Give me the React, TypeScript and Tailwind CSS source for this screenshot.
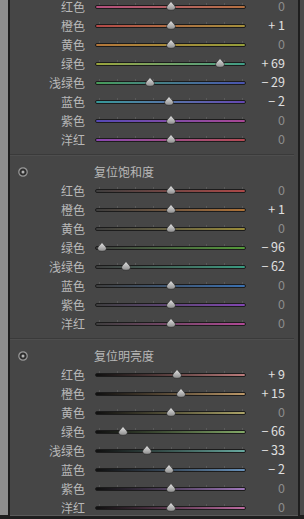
import React from 'react';

type Row = { label: string; value: number; track: string };

const hue: Row[] = [
  { label: '红色', value: 0, track: 'from-[#b44f7e] to-[#b4703f]' },
  { label: '橙色', value: 1, track: 'from-[#b44848] to-[#a48f3a]' },
  { label: '黄色', value: 0, track: 'from-[#b4763a] to-[#949e3a]' },
  { label: '绿色', value: 69, track: 'from-[#9aa43a] to-[#3e9c86]' },
  { label: '浅绿色', value: -29, track: 'from-[#489c58] to-[#4a52b0]' },
  { label: '蓝色', value: -2, track: 'from-[#349898] to-[#6446b2]' },
  { label: '紫色', value: 0, track: 'from-[#5448b6] to-[#a84694]' },
  { label: '洋红', value: 0, track: 'from-[#8a46b2] to-[#b44a52]' },
];

const saturation: Row[] = [
  { label: '红色', value: 0, track: 'from-[#3e3e3e] to-[#ac4848]' },
  { label: '橙色', value: 1, track: 'from-[#3e3e3e] to-[#ae7236]' },
  { label: '黄色', value: 0, track: 'from-[#3e3e3e] to-[#9a8c38]' },
  { label: '绿色', value: -96, track: 'from-[#3e3e3e] to-[#549a38]' },
  { label: '浅绿色', value: -62, track: 'from-[#3e3e3e] to-[#389a80]' },
  { label: '蓝色', value: 0, track: 'from-[#3e3e3e] to-[#3a70b0]' },
  { label: '紫色', value: 0, track: 'from-[#3e3e3e] to-[#8246b2]' },
  { label: '洋红', value: 0, track: 'from-[#3e3e3e] to-[#b04896]' },
];

const luminance: Row[] = [
  { label: '红色', value: 9, track: 'from-[#101010] to-[#bc7c7c]' },
  { label: '橙色', value: 15, track: 'from-[#101010] to-[#bc9868]' },
  { label: '黄色', value: 0, track: 'from-[#101010] to-[#aca468]' },
  { label: '绿色', value: -66, track: 'from-[#101010] to-[#84aa68]' },
  { label: '浅绿色', value: -33, track: 'from-[#101010] to-[#68aaa0]' },
  { label: '蓝色', value: -2, track: 'from-[#101010] to-[#6892bc]' },
  { label: '紫色', value: 0, track: 'from-[#101010] to-[#a078bc]' },
  { label: '洋红', value: 0, track: 'from-[#101010] to-[#bc6aa0]' },
];

function formatValue(v: number) {
  if (v > 0) return `+ ${v}`;
  if (v < 0) return `− ${Math.abs(v)}`;
  return '0';
}

function Thumb() {
  return (
    <svg width="11" height="10" viewBox="0 0 11 10">
      <defs>
        <linearGradient id="thumbFill" x1="0" y1="0" x2="0" y2="1">
          <stop offset="0" stopColor="#e4e4e4" />
          <stop offset="1" stopColor="#8c8c8c" />
        </linearGradient>
      </defs>
      <path d="M5.5 0.5 L9.4 5 Q10.5 6.6 9.4 8 Q8.3 9.3 5.5 9.3 Q2.7 9.3 1.6 8 Q0.5 6.6 1.6 5 Z" fill="url(#thumbFill)" stroke="#262626" strokeWidth="0.6" />
    </svg>
  );
}

const ticks = [0, 1, 2, 3, 4, 5, 6, 7, 8];

function SliderRow({ row }: { row: Row }) {
  // thumb travels between 4px and 147px of the 151px track
  const left = 75.5 + (row.value / 100) * 71.5;
  return (
    <div className="flex h-[19px] items-center">
      <div className="w-[75px] text-right text-[12px] text-[#b8b8b8]">{row.label}</div>
      <div className="relative ml-[10px] h-full w-[151px]">
        {ticks.map((t) => (
          <div
            key={t}
            className="absolute top-[6px] h-[2px] w-[1px] bg-[#595959]"
            style={{ left: 4 + t * 17.9 }}
          />
        ))}
        <div className={`absolute left-0 right-0 top-[8px] h-[4px] rounded-full border border-[#1c1c1c] bg-linear-to-r ${row.track}`} />
        <div className="absolute top-[4px] -translate-x-1/2" style={{ left }}>
          <Thumb />
        </div>
      </div>
      <div className={`w-[39px] text-right text-[12.5px] ${row.value === 0 ? 'text-[#8c8c8c]' : 'text-[#e0e0e0]'}`}>
        {formatValue(row.value)}
      </div>
    </div>
  );
}

function ResetIcon() {
  return (
    <svg width="10" height="10" viewBox="0 0 10 10">
      <circle cx="5" cy="5" r="4.2" fill="#2e2e2e" stroke="#9a9a9a" strokeWidth="1.2" />
      <circle cx="5" cy="5" r="1.5" fill="#b4b4b4" />
    </svg>
  );
}

function Section({ title, rows }: { title?: string; rows: Row[] }) {
  return (
    <div>
      {title && (
        <div className="flex h-[19px] items-center">
          <div className="ml-[8px] flex w-[10px] items-center">
            <ResetIcon />
          </div>
          <div className="ml-[66px] text-[12px] text-[#b8b8b8]">{title}</div>
        </div>
      )}
      {rows.map((r) => (
        <SliderRow key={r.label} row={r} />
      ))}
    </div>
  );
}

function Divider() {
  return (
    <div className="mr-[4px] mt-[5px] mb-[7px] h-[1px] bg-[#3a3a3a] shadow-[0_1px_0_#4e4e4e]" />
  );
}

export default function App() {
  return (
    <div className="flex h-[519px] w-[304px] flex-col bg-[#1e1e1e] font-['Noto_Sans_CJK_SC',sans-serif] leading-none">
      <div className="flex h-[515px]">
        <div className="w-[8px] bg-[#8e8e8e]" />
        <div className="w-[2px] bg-[#1e1e1e]" />
        <div className="flex-1 overflow-hidden bg-[#464646]">
          <div className="-mt-[3px]">
            <Section rows={hue} />
            <Divider />
            <Section title="复位饱和度" rows={saturation} />
            <Divider />
            <Section title="复位明亮度" rows={luminance} />
          </div>
        </div>
        <div className="w-[2px] bg-[#1e1e1e]" />
        <div className="w-[4px] bg-[#4a4a4a]" />
      </div>
      <div className="ml-[10px] mr-[6px] h-[1px] bg-[#5a5a5a]" />
    </div>
  );
}
